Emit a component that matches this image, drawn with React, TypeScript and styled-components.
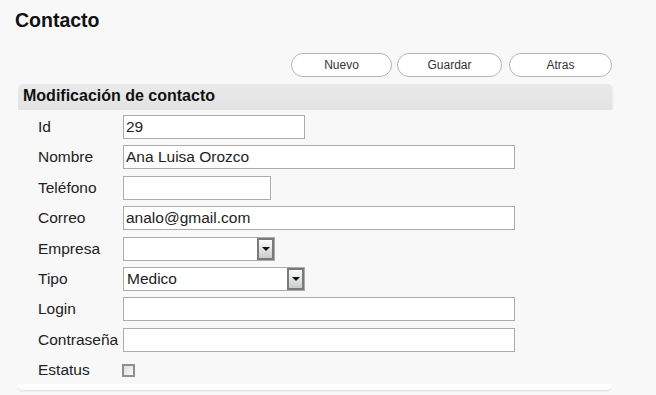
import styled, { createGlobalStyle } from 'styled-components';

const GlobalStyle = createGlobalStyle`
    html, body {
        margin: 0;
        padding: 0;
        background-color: #f8f8f8;
        font-family: "Liberation Sans", Arial, sans-serif;
    }
`

const Page = styled.div`
    width: 656px;
    height: 395px;
    padding: 8px 0 0 15px;
    box-sizing: border-box;
    overflow: hidden;
`

const Title = styled.h1`
    margin: 0;
    font-size: 19.5px;
    font-weight: bold;
    color: #111;
    line-height: 24px;
`

const Toolbar = styled.div`
    display: flex;
    justify-content: flex-end;
    gap: 5px;
    width: 597px;
    margin-top: 21px;
`

const Button = styled.button<{ $w: number; $ml?: number }>`
    width: ${p => p.$w}px;
    margin-left: ${p => p.$ml ?? 0}px;
    height: 24px;
    border: 1px solid #b4b4b4;
    border-radius: 12px;
    background-color: #fff;
    font-family: "Liberation Sans", Arial, sans-serif;
    font-size: 12px;
    color: #333;
    padding: 0;
    cursor: pointer;
`

const Panel = styled.div`
    width: 594px;
    margin: 7px 0 0 3px;
`

const PanelHeader = styled.div`
    height: 26px;
    box-sizing: border-box;
    padding: 3px 5px 0;
    background: linear-gradient(#e9e9e9, #e3e3e3);
    border-radius: 5px 5px 0 0;
    box-shadow: 1px 0 0 #efefef, 2px 0 0 #f3f3f3;
    font-size: 16px;
    font-weight: bold;
    color: #111;
`

const Form = styled.div`
    display: grid;
    grid-template-columns: 85px auto;
    grid-auto-rows: 24px;
    row-gap: 6.4px;
    align-items: center;
    padding: 5px 0 0 20px;
`

const Label = styled.label`
    font-size: 15.5px;
    color: #222;
    white-space: nowrap;
`

const Input = styled.input<{ $w: number }>`
    width: ${p => p.$w}px;
    height: 24px;
    box-sizing: border-box;
    border: 1px solid #ababab;
    background-color: #fff;
    padding: 0 2px;
    font-family: "Liberation Sans", Arial, sans-serif;
    font-size: 15.5px;
    color: #222;
    outline: none;
`

const Select = styled.div<{ $w: number }>`
    display: flex;
    align-items: center;
    width: ${p => p.$w}px;
    height: 24px;
    box-sizing: border-box;
    border: 1px solid #ababab;
    background-color: #fff;
    font-size: 15.5px;
    color: #222;
`

const SelectValue = styled.span`
    flex: 1;
    padding-left: 3px;
`

const SelectArrow = styled.span`
    display: flex;
    align-items: center;
    justify-content: center;
    width: 17px;
    height: 22px;
    box-sizing: border-box;
    border: 2px solid #7a7a7a;
    background: linear-gradient(#fbfbfb, #c9cdcd);

    &::after {
        content: "";
        border-left: 4px solid transparent;
        border-right: 4px solid transparent;
        border-top: 4px solid #1a1010;
    }
`

const Check = styled.span`
    width: 13px;
    height: 13px;
    margin-left: -1px;
    box-sizing: border-box;
    border: 2px solid #8f8f8f;
    background: linear-gradient(135deg, #dcdcdc, #fafafa);
`

const PanelFooter = styled.div`
    height: 6px;
    margin-top: 2px;
    background-color: #fff;
    border-bottom: 1px solid #e2e2e2;
    border-radius: 0 0 5px 5px;
    box-shadow: 0 1px 0 #eeeeee;
`

const App = () => {
    return (
        <>
            <GlobalStyle />
            <Page>
                <Title>Contacto</Title>
                <Toolbar>
                    <Button $w={101}>Nuevo</Button>
                    <Button $w={105}>Guardar</Button>
                    <Button $w={103} $ml={2}>Atras</Button>
                </Toolbar>
                <Panel>
                    <PanelHeader>Modificación de contacto</PanelHeader>
                    <Form>
                        <Label>Id</Label>
                        <Input $w={182} defaultValue="29" />
                        <Label>Nombre</Label>
                        <Input $w={392} defaultValue="Ana Luisa Orozco" />
                        <Label>Teléfono</Label>
                        <Input $w={148} />
                        <Label>Correo</Label>
                        <Input $w={392} defaultValue="analo@gmail.com" />
                        <Label>Empresa</Label>
                        <Select $w={152}>
                            <SelectValue></SelectValue>
                            <SelectArrow />
                        </Select>
                        <Label>Tipo</Label>
                        <Select $w={182}>
                            <SelectValue>Medico</SelectValue>
                            <SelectArrow />
                        </Select>
                        <Label>Login</Label>
                        <Input $w={392} />
                        <Label>Contraseña</Label>
                        <Input $w={392} type="password" />
                        <Label>Estatus</Label>
                        <Check />
                    </Form>
                    <PanelFooter />
                </Panel>
            </Page>
        </>
    )
}

export default App;
